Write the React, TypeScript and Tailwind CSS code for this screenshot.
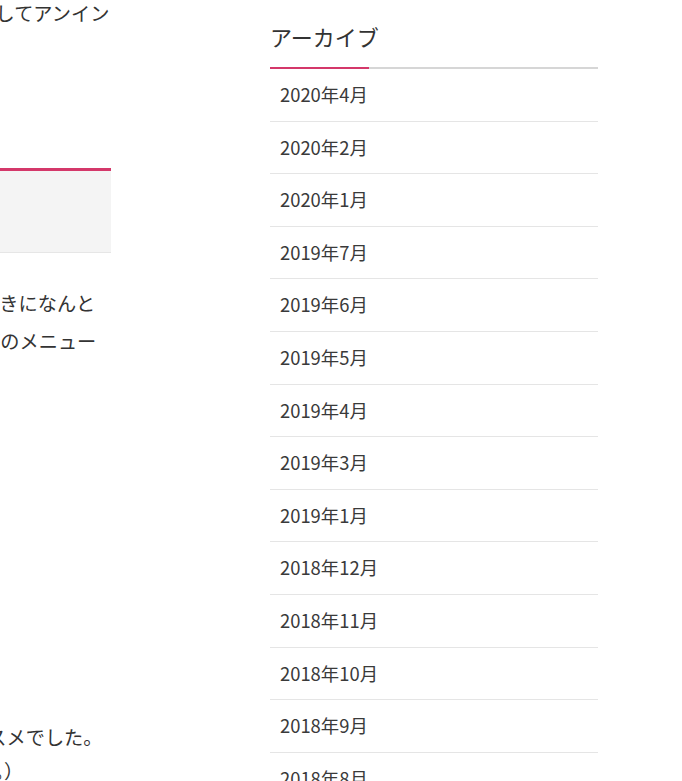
const months = [
  "2020年4月",
  "2020年2月",
  "2020年1月",
  "2019年7月",
  "2019年6月",
  "2019年5月",
  "2019年4月",
  "2019年3月",
  "2019年1月",
  "2018年12月",
  "2018年11月",
  "2018年10月",
  "2018年9月",
  "2018年8月",
  "2018年7月",
];

function MainColumn() {
  return (
    <main className="w-[111px] shrink-0 overflow-hidden text-[19.2px] leading-[38px] text-[#333] whitespace-nowrap">
      <p className="-mt-[6px] -ml-[62px]">を使用してアンイン</p>
      <div className="mt-[136px] h-[85px] w-full border-t-[3px] border-b border-t-[#d4386a] border-b-[#e6e6e6] bg-[#f4f4f4]" />
      <div className="mt-[31px]">
        <p className="-ml-[39px]">が好きになんと</p>
        <p className="-ml-[38px]">画面のメニュー</p>
      </div>
      <div className="mt-[358px]">
        <p className="-ml-[51px]">オススメでした。</p>
        <p className="-mt-[4px] -ml-[42px]">ます。）</p>
      </div>
    </main>
  );
}

function ArchiveWidget() {
  return (
    <aside className="ml-[159px] w-[328px] shrink-0 pt-[20px]">
      <h3 className="pb-[15px] text-[22px] leading-[32px] text-[#333]">
        アーカイブ
      </h3>
      <div className="flex h-[2px]">
        <div className="w-[99px] bg-[#d4386a]" />
        <div className="flex-1 bg-[#d6d6d6]" />
      </div>
      <ul>
        {months.map((m) => (
          <li
            key={m}
            className="box-border flex h-[52.6px] items-center border-b border-[#e5e5e5] pl-[10px] text-[18.4px] text-[#3a3a3a]"
          >
            {m}
          </li>
        ))}
      </ul>
    </aside>
  );
}

export default function App() {
  return (
    <div className="flex h-[781px] w-[682px] overflow-hidden bg-white font-['Noto_Sans_CJK_JP',sans-serif]">
      <MainColumn />
      <ArchiveWidget />
    </div>
  );
}
